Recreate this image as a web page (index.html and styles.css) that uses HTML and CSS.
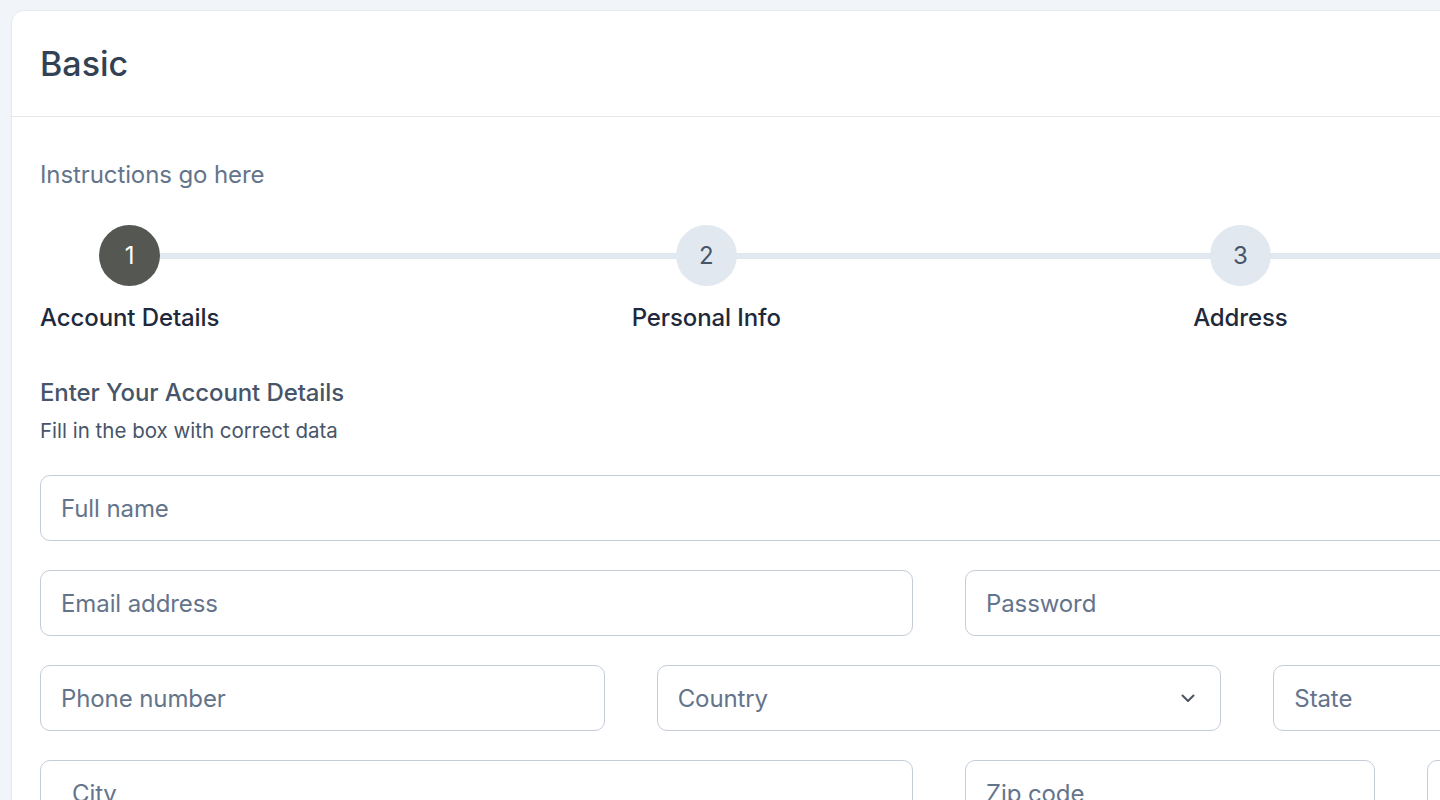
FILE: index.html
```html
<!DOCTYPE html>
<html lang="en">
<head>
<meta charset="utf-8">
<title>Basic</title>
<link rel="stylesheet" href="styles.css">
</head>
<body>
<div class="page">
  <section class="card">
    <header class="card-header">
      <h1 class="card-title">Basic</h1>
    </header>
    <div class="card-body">
      <p class="instructions">Instructions go here</p>

      <ol class="stepper">
        <li class="step active"><span class="step-circle">1</span><span class="step-label">Account Details</span></li>
        <li class="step"><span class="step-circle">2</span><span class="step-label">Personal Info</span></li>
        <li class="step"><span class="step-circle">3</span><span class="step-label">Address</span></li>
        <li class="step step-final"><span class="step-circle">4</span><span class="step-label">Submission</span></li>
      </ol>

      <h2 class="section-title">Enter Your Account Details</h2>
      <p class="section-sub">Fill in the box with correct data</p>

      <form class="fields">
        <input class="field span-12" type="text" placeholder="Full name">
        <input class="field span-6" type="email" placeholder="Email address">
        <input class="field span-6" type="password" placeholder="Password">
        <input class="field span-4" type="tel" placeholder="Phone number">
        <div class="select-wrap span-4">
          <select class="field select">
            <option>Country</option>
          </select>
          <svg class="chevron" width="14" height="9" viewBox="0 0 14 9" fill="none"><path d="M1.5 1.5 7 7l5.5-5.5" stroke="#4b5563" stroke-width="2" stroke-linecap="round" stroke-linejoin="round"/></svg>
        </div>
        <input class="field span-4" type="text" placeholder="State">
        <input class="field field-city span-6" type="text" placeholder="City">
        <input class="field span-3" type="text" placeholder="Zip code">
        <input class="field span-3" type="text" placeholder="Street">
      </form>
    </div>
  </section>
</div>
</body>
</html>
```

FILE: styles.css
```css
html, body {
  margin: 0;
  padding: 0;
  overflow: hidden;
  background: #f1f5f9;
}

body {
  font-family: Inter, "Noto Sans", "Liberation Sans", sans-serif;
  color: #1e293b;
}

.page {
  padding: 11px 12px;
  width: 1854px;
}

.card {
  width: 1854px;
  background: #ffffff;
  border-radius: 12px;
  box-shadow: 0 1px 3px rgba(15, 23, 42, 0.06), 0 0 0 1px rgba(15, 23, 42, 0.03);
}

.card-header {
  height: 105px;
  padding: 0 28px;
  display: flex;
  align-items: center;
  border-bottom: 1px solid #e5e7eb;
}

.card-title {
  margin: 0;
  font-size: 34px;
  line-height: 44px;
  font-weight: 500;
  color: #334155;
}

.card-body {
  padding: 40px 28px 40px;
}

.instructions {
  margin: 0;
  font-size: 24px;
  line-height: 36px;
  color: #64748b;
  letter-spacing: -0.1px;
}

.stepper {
  list-style: none;
  margin: 32px 0 0;
  padding: 0;
  display: flex;
  justify-content: space-between;
  position: relative;
}

.stepper::before {
  content: "";
  position: absolute;
  left: 90px;
  right: 60px;
  top: 28px;
  height: 6px;
  background: #e2e8f0;
}

.step {
  display: flex;
  flex-direction: column;
  align-items: center;
  position: relative;
}

.step-final {
  min-width: 138px;
}

.step-circle {
  width: 61px;
  height: 61px;
  border-radius: 50%;
  background: #e2e8f0;
  color: #475569;
  font-size: 24px;
  display: flex;
  align-items: center;
  justify-content: center;
}

.step.active .step-circle {
  background: #555753;
  color: #ffffff;
}

.step-label {
  margin-top: 14px;
  font-size: 24px;
  line-height: 36px;
  font-weight: 500;
  color: #1e293b;
  white-space: nowrap;
  letter-spacing: -0.1px;
}

.section-title {
  margin: 39px 0 0;
  font-size: 24px;
  line-height: 36px;
  font-weight: 500;
  color: #475569;
  letter-spacing: -0.1px;
}

.section-sub {
  margin: 5px 0 0;
  font-size: 20.5px;
  line-height: 30px;
  color: #475569;
}

.fields {
  margin-top: 29px;
  display: grid;
  grid-template-columns: repeat(12, 1fr);
  column-gap: 52px;
  row-gap: 29px;
}

.span-12 { grid-column: span 12; }
.span-6 { grid-column: span 6; }
.span-4 { grid-column: span 4; }
.span-3 { grid-column: span 3; }

.field {
  box-sizing: border-box;
  width: 100%;
  height: 66px;
  margin: 0;
  padding: 0 20px;
  border: 1px solid #c4ccd8;
  border-radius: 10px;
  background: #ffffff;
  font-family: inherit;
  font-size: 24px;
  letter-spacing: -0.1px;
  color: #334155;
  outline: none;
}

.field::placeholder {
  color: #64748b;
  opacity: 1;
}

.field-city {
  padding-left: 31px;
}

.select-wrap {
  position: relative;
}

.select {
  appearance: none;
  -webkit-appearance: none;
  color: #64748b;
}

.chevron {
  position: absolute;
  right: 26px;
  top: 29px;
  pointer-events: none;
}
```
